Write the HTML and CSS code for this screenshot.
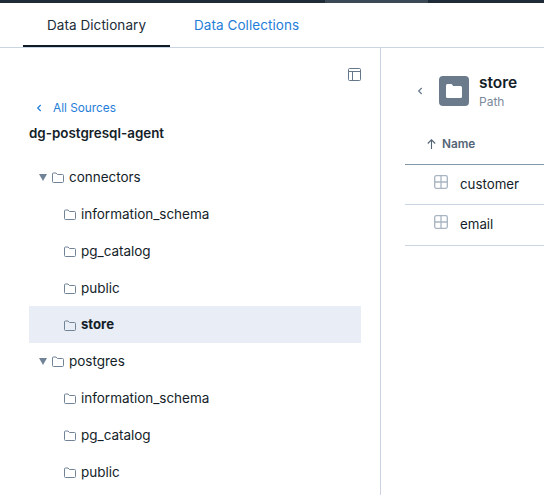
FILE: index.html
```html
<!DOCTYPE html>
<html lang="en">
<head>
<meta charset="utf-8">
<title>Data Dictionary</title>
<link rel="stylesheet" href="styles.css">
</head>
<body>
<svg class="defs" width="0" height="0">
  <symbol id="folder" viewBox="0 0 12 12"><path d="M.5 9.500V2q0-1 1-1H4l1.500 1.500h5q1 0 1 1v6q0 1-1 1h-9q-1 0-1-1z" fill="none" stroke="currentColor"/></symbol>
  <symbol id="chevron" viewBox="0 0 6 8"><path d="M4.700 1 1.700 4l3 3" fill="none" stroke="currentColor" stroke-width="1.200"/></symbol>
  <symbol id="table" viewBox="0 0 14 14"><rect x=".7" y=".7" width="12.600" height="12.600" rx="1.500" fill="none" stroke="currentColor" stroke-width="1.300"/><path d="M7 .7v12.600M.7 7h12.600" fill="none" stroke="currentColor" stroke-width="1.300"/></symbol>
</svg>
<div class="topbar"><div class="topbar-active"></div></div>
<nav class="tabs">
  <a class="tab active">Data Dictionary</a>
  <a class="tab">Data Collections</a>
</nav>
<main class="panes">
  <aside class="sidebar">
    <div class="tools">
      <svg width="13" height="13" viewBox="0 0 13 13"><path d="M1.500.5h10q1 0 1 1v10q0 1-1 1h-10q-1 0-1-1v-10q0-1 1-1zM.5 3.500h12M4.500 3.500v9" fill="none" stroke="currentColor"/></svg>
    </div>
    <a class="back"><svg width="6" height="8"><use href="#chevron"/></svg><span>All Sources</span></a>
    <h2 class="source">dg-postgresql-agent</h2>
    <ul class="tree">
      <li class="node parent"><i class="caret"></i><svg class="folder"><use href="#folder"/></svg><span>connectors</span></li>
      <li class="node"><svg class="folder"><use href="#folder"/></svg><span>information_schema</span></li>
      <li class="node"><svg class="folder"><use href="#folder"/></svg><span>pg_catalog</span></li>
      <li class="node"><svg class="folder"><use href="#folder"/></svg><span>public</span></li>
      <li class="node selected"><svg class="folder"><use href="#folder"/></svg><span>store</span></li>
      <li class="node parent"><i class="caret"></i><svg class="folder"><use href="#folder"/></svg><span>postgres</span></li>
      <li class="node"><svg class="folder"><use href="#folder"/></svg><span>information_schema</span></li>
      <li class="node"><svg class="folder"><use href="#folder"/></svg><span>pg_catalog</span></li>
      <li class="node"><svg class="folder"><use href="#folder"/></svg><span>public</span></li>
    </ul>
  </aside>
  <section class="detail">
    <header class="heading">
      <svg class="prev" width="6" height="8"><use href="#chevron"/></svg>
      <div class="badge"><svg width="16" height="14" viewBox="0 0 16 14"><path d="M0 1.500Q0 0 1.500 0H5q1 0 1.500 1L7 2h7.500Q16 2 16 3.500v9q0 1.500-1.500 1.500h-13Q0 14 0 12.500z" fill="#fff"/></svg></div>
      <div class="titles"><h1>store</h1><p>Path</p></div>
    </header>
    <div class="thead"><svg width="9" height="10" viewBox="0 0 9 10"><path d="M4.500 10V1M.8 4.500 4.500.8l3.700 3.700" fill="none" stroke="currentColor" stroke-width="1.100"/></svg><span>Name</span></div>
    <div class="row"><svg class="table-icon"><use href="#table"/></svg><span>customer</span></div>
    <div class="row second"><svg class="table-icon"><use href="#table"/></svg><span>email</span></div>
  </section>
</main>
</body>
</html>
```
FILE: styles.css
```css
* { box-sizing: border-box; }
body {
  margin: 0;
  height: 495px;
  overflow: hidden;
  background: #fff;
  color: #141e29;
  font: 13.5px/20px Inter, "Liberation Sans", sans-serif;
}
h1, h2, p, ul { margin: 0; padding: 0; }
svg { display: block; flex: none; }
.defs { position: absolute; }
.topbar { height: 3px; padding-left: 325px; background: #202b38; }
.topbar-active { width: 103px; height: 3px; background: #3b4956; }
.tabs { display: flex; height: 45px; padding-left: 23px; border-bottom: 1px solid #cbd4e1; }
.tab { height: 44px; padding: 12px 24px 0; color: #1f7ed8; letter-spacing: .06px; white-space: nowrap; }
.tab.active { width: 147px; border-bottom: 2px solid #101b28; color: #202c38; }
.panes { display: flex; height: 447px; }
.sidebar { width: 381px; flex: none; padding: 20px 19px 0 29px; border-right: 1px solid #cbd4e1; }
.tools { display: flex; justify-content: flex-end; height: 30px; color: #65778a; }
.back { display: flex; align-items: center; gap: 11px; height: 20px; padding-left: 7px; color: #1f7ed8; font-size: 11.8px; }
.source { height: 41px; padding-top: 5px; font-size: 13.4px; line-height: 20px; font-weight: 600; }
.tree { list-style: none; }
.node { display: flex; align-items: center; height: 36.8px; padding-left: 35px; letter-spacing: -.02px; }
.node.parent { padding-left: 10px; }
.node span { margin-left: 5px; }
.selected { background: #e9edf5; font-size: 13.2px; font-weight: 700; }
.selected span { margin-bottom: 1px; }
.folder { width: 12px; height: 12px; color: #718396; position: relative; top: 1px; }
.caret { margin-right: 5px; border: 4px solid transparent; border-top: 7px solid #718396; border-bottom: 0; }
.detail { flex: 1; min-width: 0; padding: 24px 0 0 24px; }
.heading { display: flex; height: 60px; padding-left: 12px; }
.prev { margin-top: 15px; color: #65778a; }
.badge { display: flex; align-items: center; justify-content: center; width: 30px; height: 30px; margin: 4px 10px 0 16px; border-radius: 4px; background: #6b7b8c; }
h1 { font-size: 15.5px; line-height: 22px; font-weight: 600; }
.titles p { color: #7c8a9c; font-size: 12px; line-height: 16px; }
.thead { display: flex; gap: 6px; height: 33px; padding: 2px 0 0 22px; border-bottom: 1px solid #8295a9; color: #526475; font-size: 11.8px; font-weight: 600; }
.thead svg { margin-top: 5px; }
.row { display: flex; gap: 12px; height: 40px; padding: 10px 0 0 29px; border-bottom: 1px solid #cbd4e1; font-size: 13.3px; }
.row span { margin-top: -1px; }
.row.second { height: 41px; }
.table-icon { width: 14px; height: 14px; color: #a8b4c2; }
```
